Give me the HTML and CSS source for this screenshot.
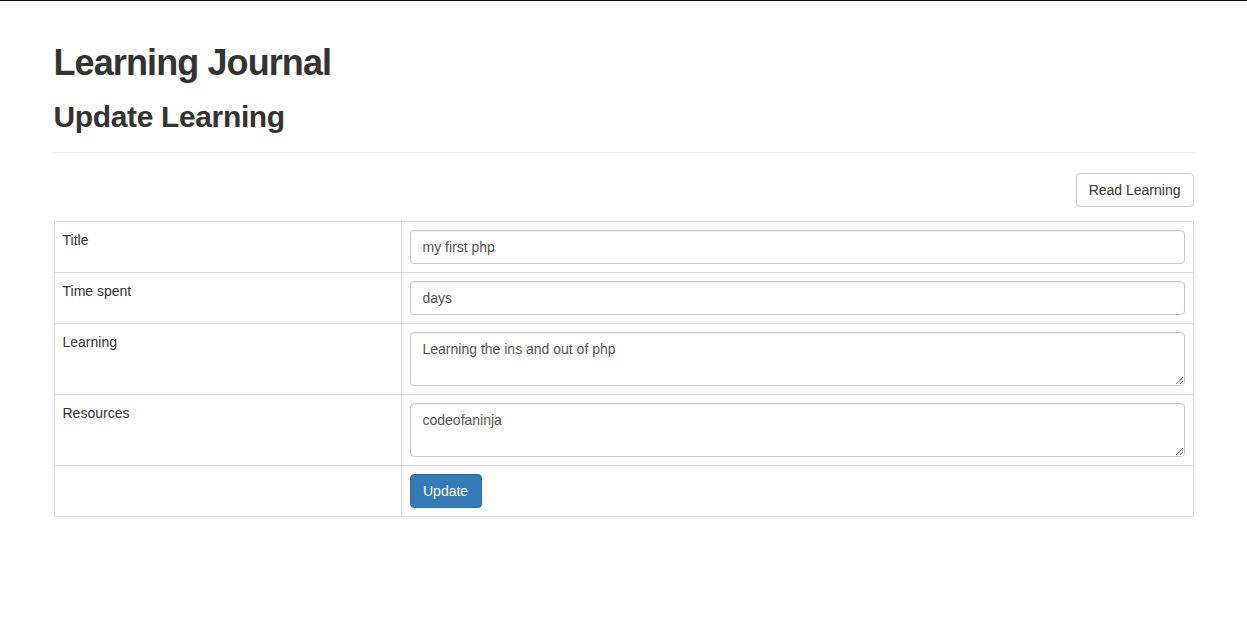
FILE: index.html
```html
<!DOCTYPE html>
<html lang="en">
<head>
<meta charset="utf-8">
<title>Learning Journal</title>
<link rel="stylesheet" href="styles.css">
</head>
<body>
<div class="container">
  <h1 class="site-title">Learning Journal</h1>
  <div class="page-header">
    <h2 class="page-title">Update Learning</h2>
  </div>
  <div class="actions">
    <a class="btn btn-default" href="#">Read Learning</a>
  </div>
  <form class="entry-form">
    <table class="table-bordered">
      <tr>
        <td class="label-cell">Title</td>
        <td><input class="form-control" type="text" value="my first php"></td>
      </tr>
      <tr>
        <td class="label-cell">Time spent</td>
        <td><input class="form-control" type="text" value="days"></td>
      </tr>
      <tr>
        <td class="label-cell">Learning</td>
        <td><textarea class="form-control area">Learning the ins and out of php</textarea></td>
      </tr>
      <tr>
        <td class="label-cell">Resources</td>
        <td><textarea class="form-control area">codeofaninja</textarea></td>
      </tr>
      <tr>
        <td class="label-cell"></td>
        <td><button type="button" class="btn btn-primary">Update</button></td>
      </tr>
    </table>
  </form>
</div>
</body>
</html>
```

FILE: styles.css
```css
* {
  box-sizing: border-box;
}

html, body {
  margin: 0;
  padding: 0;
}

body {
  border-top: 1px solid #111;
  background: #fff;
  color: #333;
  font-family: "Liberation Sans", Arial, Helvetica, sans-serif;
  font-size: 14px;
  line-height: 1.42857143;
}

.container {
  width: 1170px;
  margin: 0 auto;
  padding: 0 15px;
}

.site-title {
  margin: 42px 0 17.4px;
  font-size: 36px;
  line-height: 1.1;
  font-weight: 700;
  letter-spacing: -0.025em;
}

.page-header {
  padding-bottom: 9px;
  margin: 0 0 20px;
  border-bottom: 1px solid #eee;
}

.page-title {
  margin: 0 0 10px;
  font-size: 30px;
  line-height: 1.1;
  font-weight: 700;
  letter-spacing: -0.012em;
}

.actions {
  display: flex;
  justify-content: flex-end;
  margin-bottom: 14px;
}

.btn {
  display: inline-block;
  padding: 6px 12px;
  font-family: inherit;
  font-size: 14px;
  line-height: 1.42857143;
  border: 1px solid transparent;
  border-radius: 4px;
  text-decoration: none;
  cursor: pointer;
}

.btn-default {
  color: #333;
  background: #fff;
  border-color: #ccc;
}

.btn-primary {
  color: #fff;
  background: #337ab7;
  border-color: #2e6da4;
  padding: 6px 12.5px;
}

.entry-form {
  margin: 0;
}

.table-bordered {
  width: 100%;
  border-collapse: collapse;
  border-spacing: 0;
  border: 1px solid #ddd;
}

.table-bordered td {
  padding: 8px;
  border: 1px solid #ddd;
  vertical-align: top;
  line-height: 1.42857143;
}

.table-bordered td.label-cell {
  box-sizing: content-box;
  width: 330px;
}

.form-control {
  display: block;
  width: 100%;
  height: 34px;
  padding: 6px 12px;
  font-family: inherit;
  font-size: 14px;
  line-height: 1.42857143;
  color: #555;
  background: #fff;
  border: 1px solid #ccc;
  border-radius: 4px;
  box-shadow: inset 0 1px 1px rgba(0, 0, 0, 0.075);
  margin: 0;
}

.form-control.area {
  height: 54px;
  resize: vertical;
}
```
